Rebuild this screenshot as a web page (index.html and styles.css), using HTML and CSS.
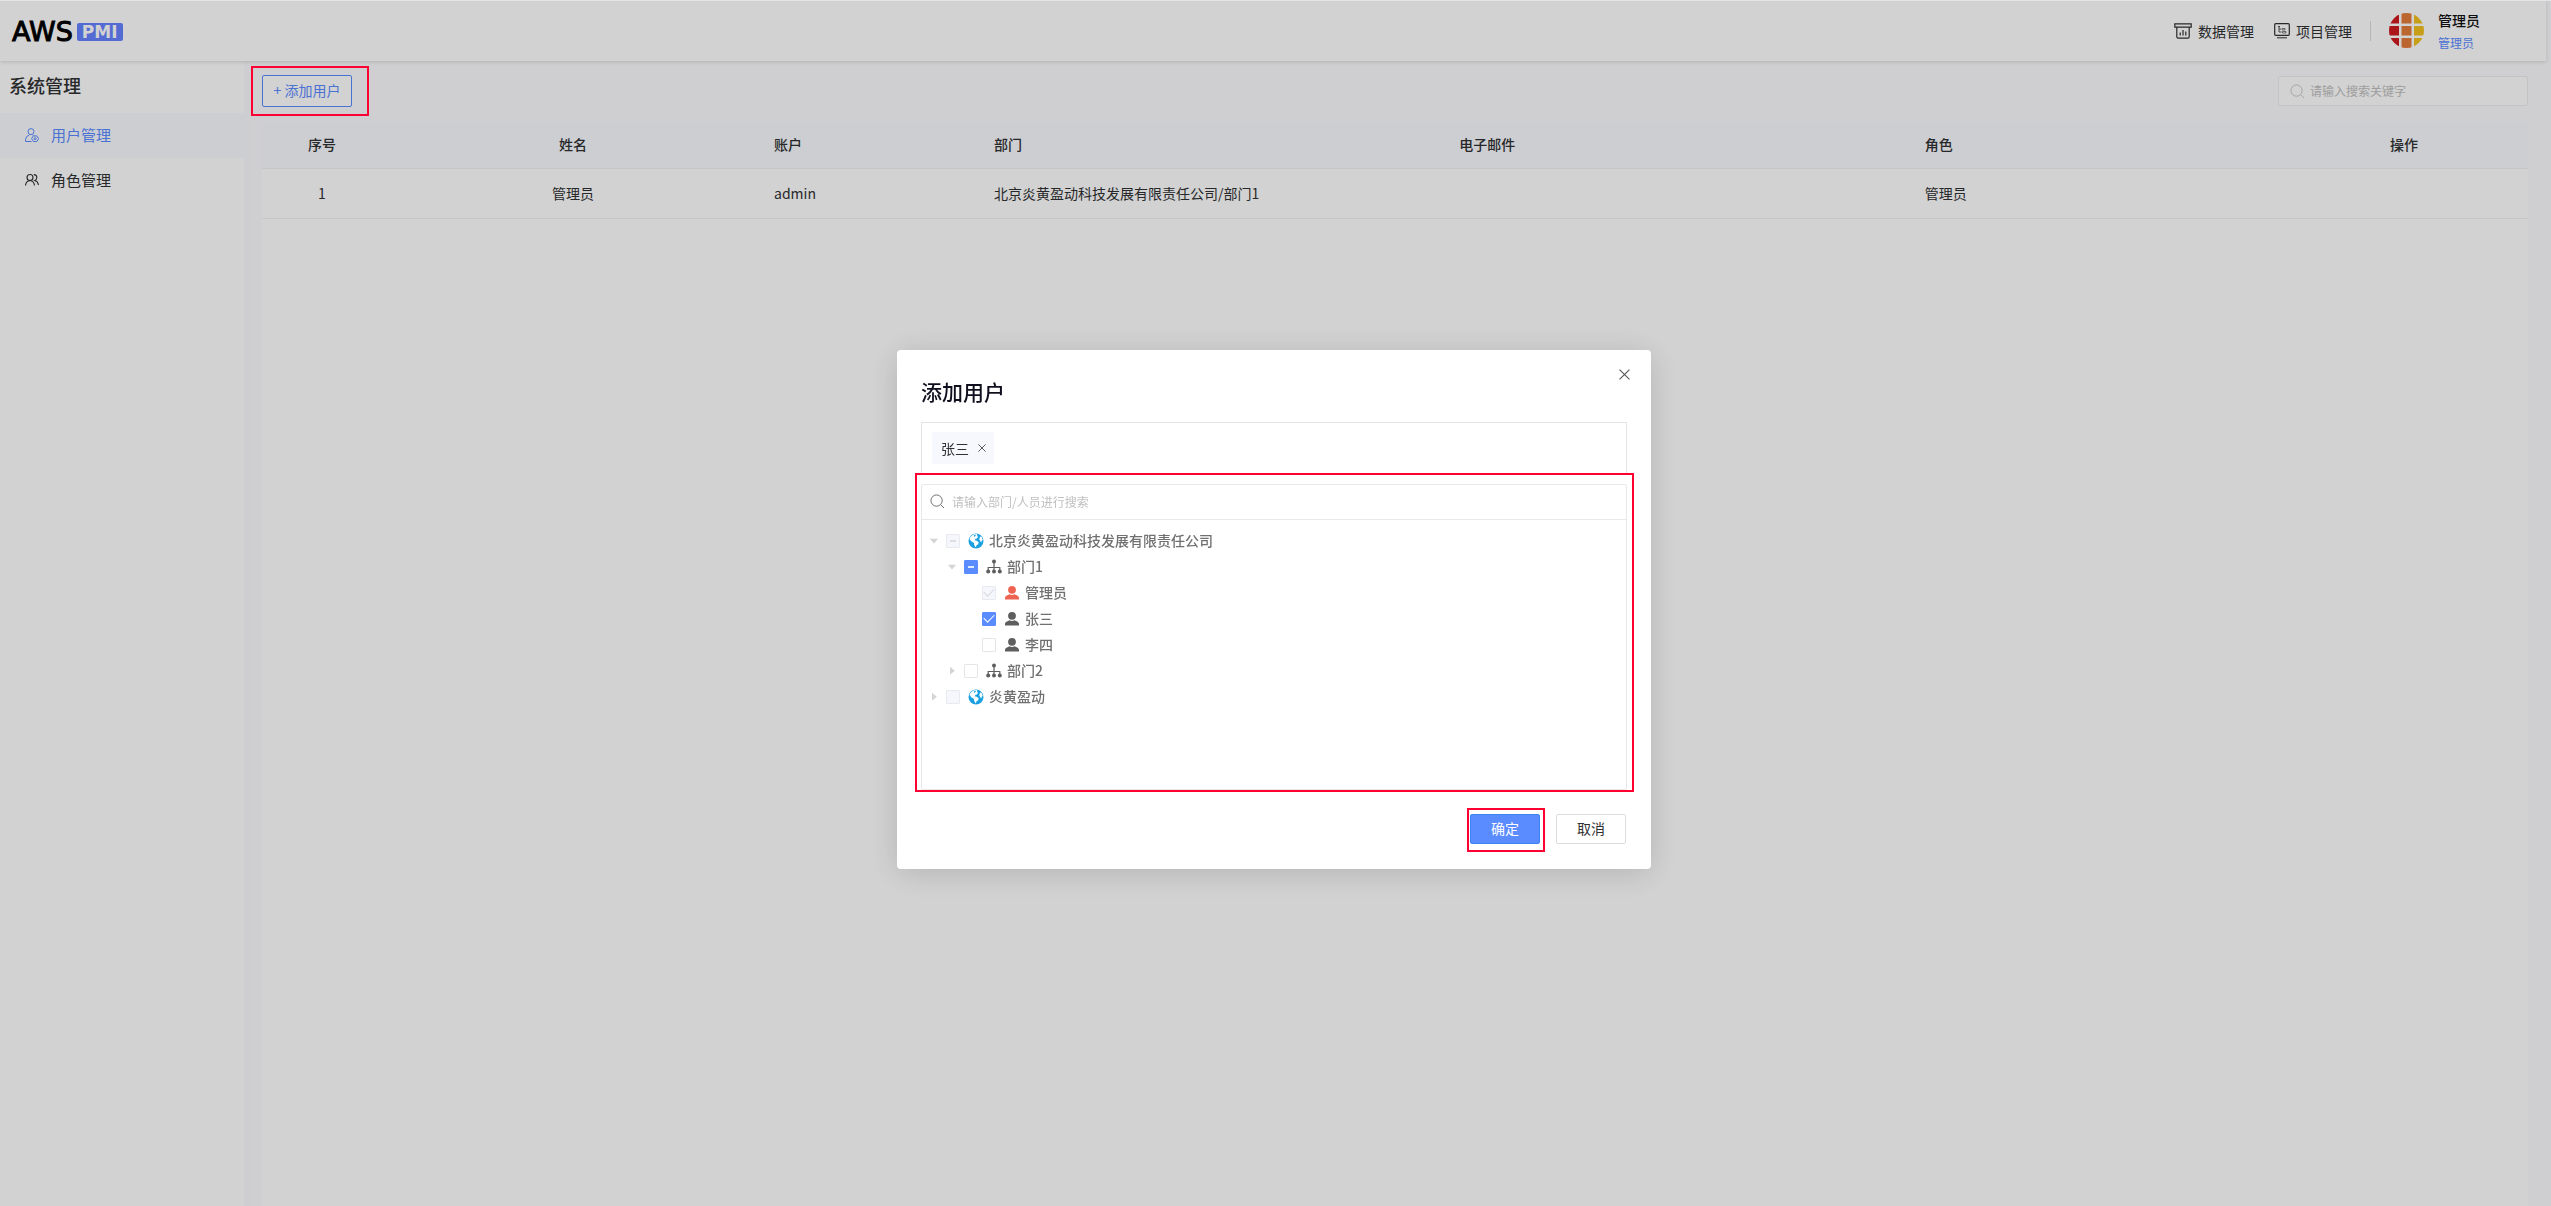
FILE: index.html
```html
<!DOCTYPE html>
<html lang="zh-CN">
<head>
<meta charset="utf-8">
<title>系统管理 - AWS PMI</title>
<link rel="stylesheet" href="styles.css">
</head>
<body>
<svg class="sprite" aria-hidden="true">
  <symbol id="i-search" viewBox="0 0 16 16"><circle cx="7" cy="7" r="6" fill="none" stroke="currentColor"/><path d="M11.5 11.5 15 15" stroke="currentColor"/></symbol>
  <symbol id="i-close" viewBox="0 0 10 10"><path d="M.5.5l9 9M9.500.5l-9 9" stroke="currentColor" fill="none"/></symbol>
  <symbol id="i-globe" viewBox="0 0 16 16"><circle cx="8" cy="8" r="7.500" fill="#1ba1e2"/><path d="M5.500 1.500 8 .8l1.500.9-.7 1.500 1.400.3L9 5.500l-1.500.3-.8 1.400 2 .5 2 1.500-.6 2-1.700 1.300-.6 2-1.600-2.500-.2-2-2.700-1.700L1.500 6l1.200-2.500zM12.300 3.500l1.200.2 1.300 3.300-1.300.8.2 1.700-1.500-1.300-1-2.200z" fill="#fff"/><path d="M6 2.200l2-.7-.5 1.500-1.500 1zM9 5.800l1.500-.8.3 1.200z" fill="#1ba1e2"/></symbol>
  <symbol id="i-org" viewBox="0 0 16 16"><path d="M8 3v9M2.200 12V8.500h11.600V12" fill="none" stroke="currentColor" stroke-width="1.200"/><circle cx="8" cy="2.600" r="2" fill="currentColor"/><circle cx="2.200" cy="12.600" r="2" fill="currentColor"/><circle cx="8" cy="12.600" r="2" fill="currentColor"/><circle cx="13.800" cy="12.600" r="2" fill="currentColor"/></symbol>
  <symbol id="i-user" viewBox="0 0 16 16"><circle cx="8" cy="4.800" r="3.900" fill="currentColor"/><path d="M1 14.500v-1.800c0-1.500 2.500-2.600 4.600-3.400Q8 10.600 10.400 9.300c2.100.8 4.600 1.900 4.600 3.400v1.800z" fill="currentColor"/></symbol>
</svg>

<div class="app">
  <header class="topbar">
    <a class="logo" href="#"><span class="logo-name">AWS</span><span class="logo-tag">PMI</span></a>
    <nav class="topnav">
      <a href="#"><svg width="18" height="16" viewBox="0 0 18 16" fill="none" stroke="currentColor" stroke-width="1.200"><path d="M.8.8h16.400v3.400H.8zM2.800 4.200v9.600q0 1.400 1.400 1.400h9.600q1.400 0 1.400-1.400V4.200M6.200 9.500v3M9 7v5.500M11.800 8.500v4"/></svg>数据管理</a>
      <a href="#"><svg width="16" height="16" viewBox="0 0 16 16" fill="none" stroke="currentColor"><rect x=".7" y=".7" width="14.600" height="11.600" rx="1" stroke-width="1.200"/><path d="M3 14.800h10"/><path d="M5 3v6h2.500M5 6h2M4 3.500h2" stroke-width=".8"/><path d="M8 5.500h3V7H8zM8.500 8.500H12V10H8.500z" stroke-width=".6"/></svg>项目管理</a>
    </nav>
    <div class="account">
      <svg class="avatar" viewBox="0 0 35 35" role="img" aria-label="头像"><defs><clipPath id="round"><circle cx="17.500" cy="17.500" r="17.500"/></clipPath></defs><g clip-path="url(#round)"><path d="M0 0h10v10.500H0zM0 13h10v9.500H0zM0 25h10v10H0z" fill="#d01a1f"/><path d="M12.500 0h10v10.500h-10zM12.500 13h10v9.500h-10zM12.500 25h10v10h-10z" fill="#e47c3a"/><path d="M25 0h10v10.500H25zM25 13h10v9.500H25zM25 25h10v10H25z" fill="#f2c01c"/></g></svg>
      <div class="who"><strong>管理员</strong><span>管理员</span></div>
    </div>
  </header>

  <div class="body">
    <aside class="sidebar">
      <h1>系统管理</h1>
      <nav>
        <a class="active" href="#"><svg width="14" height="14" viewBox="0 0 14 14" fill="none" stroke="currentColor"><circle cx="6" cy="3.600" r="3"/><path d="M6.500 13.500H.6v-2.200q0-3 3.600-4.300M7.500 7l1 .4"/><path d="M8.400 7.900h3.400l1.800 2.800-1.800 2.800H8.400l-1.800-2.800z"/><circle cx="10.100" cy="10.700" r="1"/></svg>用户管理</a>
        <a href="#"><svg width="14" height="14" viewBox="0 0 14 14" fill="none" stroke="currentColor" stroke-width="1.100"><circle cx="5" cy="4.500" r="3"/><path d="M.5 12.500Q1 8 5 7.500q4 .5 4.500 5M8.800 1.600q3.200.2 3 3.200-.2 2-2 2.700 3 .8 3.700 4.500"/></svg>角色管理</a>
      </nav>
    </aside>

    <main class="content">
      <div class="toolbar">
        <div class="add"><button type="button">+ 添加用户</button></div>
        <label class="search"><svg width="15" height="15"><use href="#i-search"/></svg><input type="search" placeholder="请输入搜索关键字" aria-label="搜索"></label>
      </div>
      <div class="panel">
        <table>
          <colgroup><col class="c-index"><col class="c-name"><col class="c-account"><col><col><col><col class="c-ops"></colgroup>
          <thead><tr><th class="center">序号</th><th class="center">姓名</th><th>账户</th><th>部门</th><th>电子邮件</th><th>角色</th><th>操作</th></tr></thead>
          <tbody><tr><td class="center">1</td><td class="center">管理员</td><td>admin</td><td>北京炎黄盈动科技发展有限责任公司/部门1</td><td></td><td>管理员</td><td></td></tr></tbody>
        </table>
      </div>
    </main>
  </div>
</div>

<div class="overlay">
  <section class="dialog" role="dialog" aria-labelledby="dlg-title">
    <button class="close" type="button" aria-label="关闭"><svg width="11" height="11"><use href="#i-close"/></svg></button>
    <h2 id="dlg-title">添加用户</h2>
    <div class="chosen"><span class="tag">张三<button type="button" aria-label="移除"><svg width="8" height="8"><use href="#i-close"/></svg></button></span></div>
    <div class="picker">
      <label class="picker-search"><svg width="15" height="15"><use href="#i-search"/></svg><input type="search" placeholder="请输入部门/人员进行搜索" aria-label="搜索部门或人员"></label>
      <ul class="tree">
        <li><div class="node"><i class="caret open"></i><label><input type="checkbox" class="partial" disabled><svg><use href="#i-globe"/></svg><span>北京炎黄盈动科技发展有限责任公司</span></label></div>
          <ul>
            <li><div class="node"><i class="caret open"></i><label><input type="checkbox" class="partial"><svg><use href="#i-org"/></svg><span>部门1</span></label></div>
              <ul>
                <li><div class="node"><i class="caret none"></i><label><input type="checkbox" checked disabled><svg class="me"><use href="#i-user"/></svg><span>管理员</span></label></div></li>
                <li><div class="node"><i class="caret none"></i><label><input type="checkbox" checked><svg><use href="#i-user"/></svg><span>张三</span></label></div></li>
                <li><div class="node"><i class="caret none"></i><label><input type="checkbox"><svg><use href="#i-user"/></svg><span>李四</span></label></div></li>
              </ul>
            </li>
            <li><div class="node"><i class="caret"></i><label><input type="checkbox"><svg><use href="#i-org"/></svg><span>部门2</span></label></div></li>
          </ul>
        </li>
        <li><div class="node"><i class="caret"></i><label><input type="checkbox" disabled><svg><use href="#i-globe"/></svg><span>炎黄盈动</span></label></div></li>
      </ul>
    </div>
    <footer>
      <div class="confirm"><button class="btn primary" type="button">确定</button></div>
      <button class="btn" type="button">取消</button>
    </footer>
  </section>
</div>
</body>
</html>
```
FILE: styles.css
```css
* { box-sizing: border-box; }
body {
  margin: 0;
  background: #fcfcfe;
  color: #303133;
  font: 14px/20px "Noto Sans CJK SC", "Noto Sans", sans-serif;
}
h1, h2, ul { margin: 0; padding: 0; font-weight: 500; }
ul { list-style: none; }
a { color: inherit; text-decoration: none; }
button, input { font: inherit; color: inherit; margin: 0; }
button { cursor: pointer; }
input { outline: 0; }
.sprite { display: none; }

.app { min-height: 100vh; padding-right: 5px; display: flex; flex-direction: column; }

/* Top bar */
.topbar {
  height: 61px;
  flex: none;
  display: flex;
  align-items: center;
  padding: 0 66px 0 12px;
  background: #fff;
  box-shadow: 0 1px 4px rgba(0, 0, 0, .14);
  position: relative;
}
.logo { display: flex; align-items: center; gap: 4px; margin-right: auto; padding-top: 2px; }
.logo-name { font: 27px/24px "DejaVu Sans", sans-serif; color: #000; -webkit-text-stroke: 1px #000; }
.logo-tag {
  padding: 0 5px;
  border-radius: 2px;
  background: #6583ff;
  color: #fff;
  font: 700 17px/18px "DejaVu Sans", sans-serif;
}
.topnav { display: flex; gap: 20px; padding-right: 18px; margin-right: 18px; border-right: 1px solid #dcdcdc; }
.topnav a { display: flex; align-items: center; gap: 6px; }
.account { display: flex; align-items: center; gap: 14px; }
.avatar { width: 35px; height: 35px; }
.who { display: flex; flex-direction: column; gap: 3px; padding-top: 2px; }
.who strong { font-weight: 500; color: #111; }
.who span { font-size: 12px; color: #5a8bff; }

/* Sidebar */
.body { flex: 1; display: flex; }
.sidebar { width: 244px; background: #fff; }
.sidebar h1 { padding: 12px 9px 16px; font-size: 18px; line-height: 24px; }
.sidebar a { display: flex; align-items: center; gap: 12px; height: 45px; padding: 0 0 1px 25px; font-size: 15px; }
.sidebar .active { background: #f9faff; color: #5a8bff; }

/* Content */
.content {
  flex: 1;
  display: flex;
  flex-direction: column;
  padding: 14px 18px 0;
  background: linear-gradient(90deg, #f9faff, #fcfcfe 8px);
}
.toolbar { display: flex; align-items: center; justify-content: space-between; }
.add { position: relative; }
.add button {
  display: block;
  width: 90px;
  height: 32px;
  padding: 0 0 2px;
  border: 1px solid #5a8bff;
  border-radius: 2px;
  background: #fff;
  color: #5a8bff;
}
.add::after, .picker::after, .confirm::after {
  content: "";
  position: absolute;
  z-index: 20;
  border: 2px solid #ff0033;
  pointer-events: none;
}
.add::after { inset: -9px -17px -9px -11px; }
.search {
  width: 250px;
  height: 30px;
  display: flex;
  align-items: center;
  gap: 5px;
  padding: 0 11px;
  border: 1px solid #eee;
  border-radius: 2px;
  background: #fff;
  color: #c4c4c4;
}
.search input, .picker-search input { flex: 1; min-width: 0; padding: 0; border: 0; background: none; font-size: 12px; }
::placeholder { color: #c0c0c0; opacity: 1; }
.panel { flex: 1; margin-top: 15px; background: #fff; }
table { width: 100%; table-layout: fixed; border-spacing: 0; }
.c-index { width: 120px; }
.c-name { width: 382px; }
.c-account { width: 220px; }
.c-ops { width: 148px; }
th, td { padding: 0 10px 2px; text-align: left; border-bottom: 1px solid #f0f1f5; }
th { height: 47px; background: #f9faff; font-weight: 500; }
td { height: 50px; }
.center { text-align: center; }

/* Dialog */
.overlay {
  position: fixed;
  inset: 0;
  z-index: 10;
  display: flex;
  justify-content: center;
  align-items: flex-start;
  padding: 29vh 3px 0 0;
  background: rgba(0, 0, 0, .176);
  box-shadow: inset 0 1px rgba(255, 255, 255, .4);
}
.dialog {
  position: relative;
  width: 754px;
  padding: 26px 24px 25px;
  border-radius: 4px;
  background: #fff;
  box-shadow: 0 4px 32px rgba(0, 0, 0, .15);
}
.dialog h2 { margin-bottom: 16px; font-size: 21px; line-height: 30px; color: #0f0f1e; }
.close { position: absolute; top: 16px; right: 18px; width: 18px; height: 18px; padding: 0; border: 0; background: none; display: grid; place-items: center; color: #555; }
.chosen { height: 52px; padding: 9px 10px; border: 1px solid #e4e4e6; }
.tag { display: inline-flex; align-items: center; gap: 9px; height: 32px; padding: 0 8px 0 9px; border-radius: 3px; background: #f7f8fe; }
.tag button { display: flex; padding: 0; border: 0; background: none; }
.picker { position: relative; margin-top: 10px; height: 306px; border: 1px solid #e8e8e8; border-radius: 2px; display: flex; flex-direction: column; }
.picker::after { inset: -12px -8px -3px -7px; }
.picker-search { display: flex; align-items: center; gap: 7px; height: 35px; padding: 0 8px; border-bottom: 1px solid #e8e8e8; color: #666; }
.tree { padding: 8px; color: #707070; }
.tree ul { padding-left: 18px; }
.node { display: flex; align-items: center; height: 26px; gap: 8px; }
.node label { display: flex; align-items: center; gap: 5px; }
.node span { padding-bottom: 2px; }
.node svg { width: 16px; height: 16px; color: #5e5e5e; }
.node svg.me { color: #ee6352; }
.caret { width: 8px; height: 8px; background: #d4d4d4; clip-path: polygon(25% 0, 85% 50%, 25% 100%); }
.caret.open { clip-path: polygon(0 25%, 100% 25%, 50% 85%); }
.caret.none { visibility: hidden; }
.node input { appearance: none; display: grid; place-items: center; width: 14px; height: 14px; margin-right: 3px; border: 1px solid #e6e6e8; border-radius: 1px; background: #fff; color: #fff; }
.node input:checked, .node input.partial { background: #5a8bff; border-color: #5a8bff; }
.node input:disabled { background: #f5f7fd; border-color: #e8eaf0; color: #d5d8de; }
.node input:checked::after { content: ""; width: 9px; height: 5px; margin-bottom: 3px; border: solid currentColor; border-width: 0 0 1px 1px; transform: rotate(-45deg); }
.node input.partial::after { content: ""; width: 6px; height: 2px; background: currentColor; opacity: .8; }
.dialog footer { display: flex; justify-content: flex-end; gap: 16px; margin-top: 24px; padding-right: 1px; }
.confirm { position: relative; }
.confirm::after { inset: -6px -5px -8px -3px; }
.btn { display: block; width: 70px; height: 30px; padding: 0 0 2px; border: 1px solid #dcdcdf; border-radius: 2px; background: #fff; }
.btn.primary { background: #5a8bff; border-color: #3c85f5; color: #fff; }
```
